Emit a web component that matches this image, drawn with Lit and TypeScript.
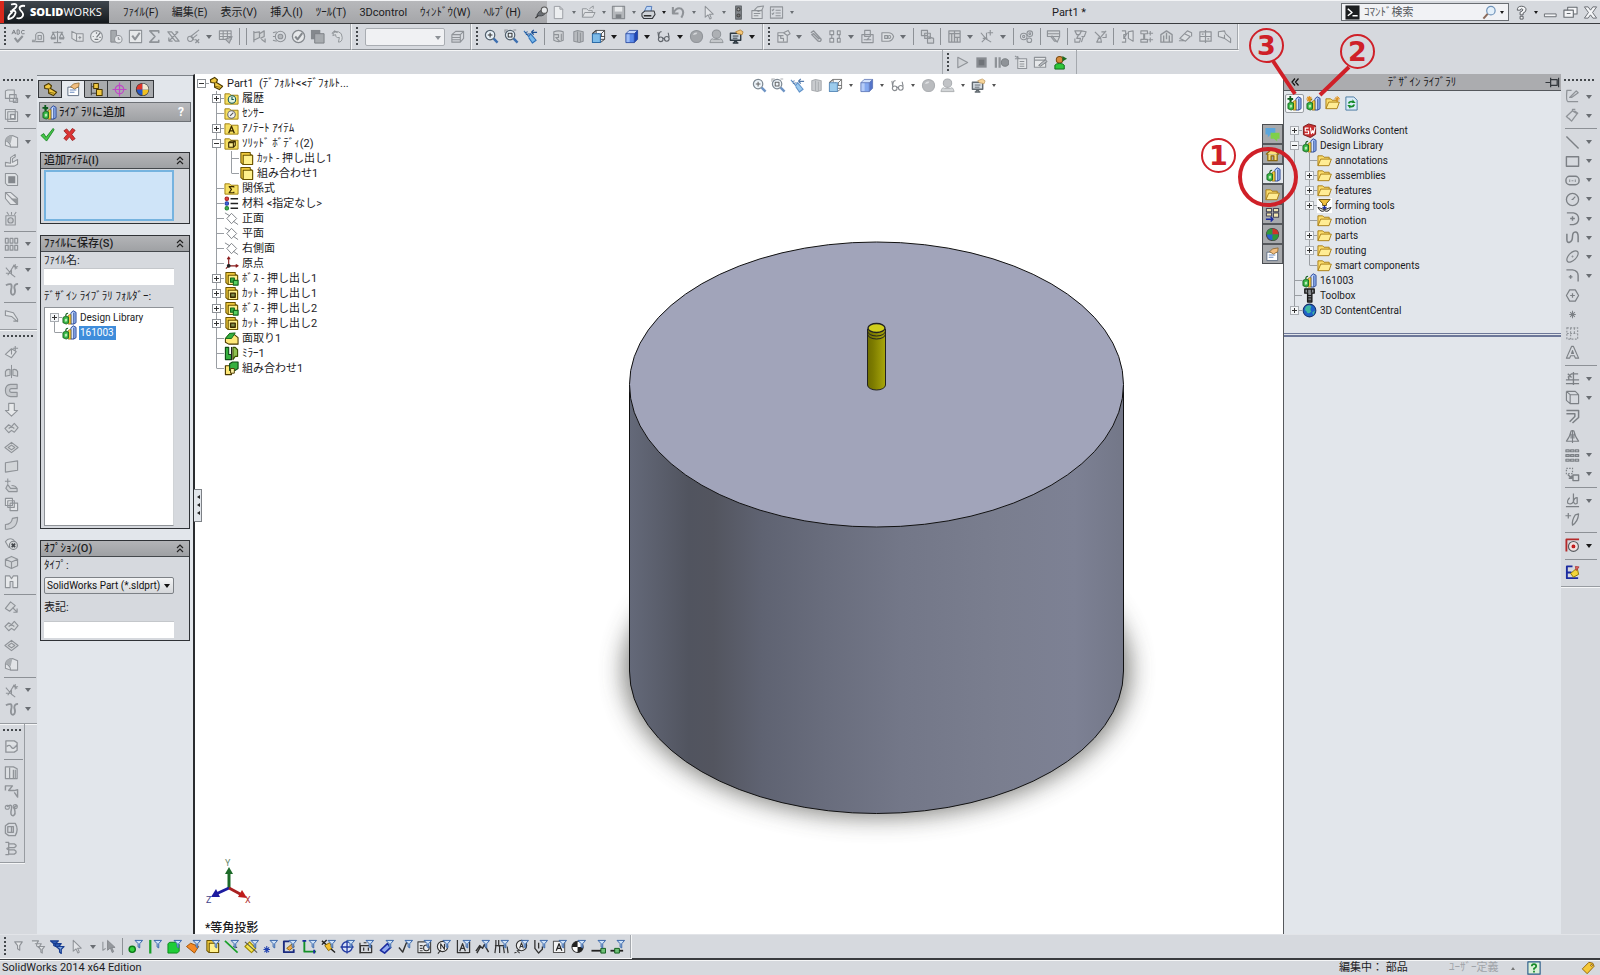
import { LitElement, html, css, nothing } from "lit";
import { customElement } from "lit/decorators.js";
import { classMap } from "lit/directives/class-map.js";
import { unsafeSVG } from "lit/directives/unsafe-svg.js";

const GREY = "#8f9398";
const line = (d: string, c = GREY, w = 1.15, f = "none") =>
  `<path d="${d}" fill="${f}" stroke="${c}" stroke-width="${w}" stroke-linejoin="round"/>`;
const fill = (d: string, c: string) => `<path d="${d}" fill="${c}"/>`;
const ring = (x: number, y: number, r: number, c = GREY, f = "none", w = 1.1) =>
  `<circle cx="${x}" cy="${y}" r="${r}" fill="${f}" stroke="${c}" stroke-width="${w}"/>`;

const funnel = (c = "#2f5fa8", f = "#cfe2f7") => line("M7.5 1.5H15.5L12.5 5V9.5L10.8 8.5V5Z", c, 1, f);
const books =
  line("M9.5 3L12 0.8L15 2.5V13.5L12.5 15H9.5Z", "#23408f", 0.9, "#8fb0ee") + fill("M10.2 3.4L12.2 1.8V14.2H10.2Z", "#d4e2fb") + line("M12.5 3V15", "#23408f", 0.8) +
  line("M6.5 6L8 5H9.5V15H6.5Z", "#8a6a10", 0.8, "#f7cf3c") +
  line("M1 8L4 6.5L7 7.5V13.5L4.5 15L1 13.5Z", "#14601c", 0.9, "#37b544") + fill("M3 9.5L5.5 9V12L3 12.5Z", "#b7ecb4") + line("M4 6.5Q4 3.5 6.5 3.5", "#14601c", 1.1);
const folder =
  line("M1 13.5V3H6L7.5 4.5H13V7", "#a87d14", 1, "#fbdc6c") + line("M1 13.5L4 6.5H15.3L12.8 13.5Z", "#a87d14", 1, "#ffec94");
const treeFolder = line("M1 3H6L7.5 4.5H15V14H1Z", "#a08010", 1, "#f5df62");
const yellowCube = line("M2 1.5H12V3.5L14.5 5V14.5H4.5L2 12.5Z", "#6b5400", 1.1, "#efc93c") + line("M4.5 4.5H14.5V14.5H4.5Z", "#6b5400", 1.1, "#fff08c");
const page = line("M3.5 1.5H9.5L12.5 4.5V14.5H3.5ZM9.5 1.5V4.5H12.5", "#9a9da2", 1, "#eceef0");
const glassy = (c: string, d = "") => ring(6.5, 6.5, 5, c, "#e8f1f8", 1.3) + line("M10.3 10.3L14.5 14.5", "#3d6fb0", 2.6) + line(d, "#333", 1.1);
const blueCube = (a: string, b: string, c: string, s: string) =>
  fill("M2 5L5.5 1.5H14.5L11 5Z", a) + fill("M11 5L14.5 1.5V11L11 14.5Z", b) + fill("M2 5H11V14.5H2Z", c) + fill("M2 5H6V14.5H2Z", "#9dbcf6") + line("M2 5L5.5 1.5H14.5V11L11 14.5H2ZM2 5H11V14.5M11 5L14.5 1.5", s, 0.8);
const screen = (k: string) => line("M1.5 4.5H12.5V12H1.5ZM4 15H10M5 15L7 12L9 15", k, 1.5, "#c9d2da") + line("M4 7.5H10M4 9.8H9", k, 1) + line("M7 3L12 1L15 3L14 6L9 5Z", "#a97a30", 0.8, "#f5c778");

const ICONS: Record<string, string> = {
  abc: line("M1 5.5L3 1L5 5.5M1.8 4H4.2M6.5 1V5.5H8.5Q9.8 4.2 8.5 3.3Q9.5 2 8.5 1ZM14.5 1.7Q11 0.5 11 3.3Q11 6.2 14.5 5", "#7c8085", 1) + line("M4 9.5L7 13.5L12.5 7.5", GREY, 2.3),
  measure: line("M5 12V6Q6 3.5 9 3.5Q13.5 3.5 13.5 8V13.5H5M1 12H5M7.5 11V7H11V11Z") + line("M1 13.5H5"),
  balance: line("M8 2V14M4 14.5H12M2 3.5H14M1 9.5L3.5 4L6 9.5ZM10 9.5L12.5 4L15 9.5ZM1 10.5H6M10 10.5H15"),
  section: line("M2 2.5L7 5H14V13H7L2 10ZM7 5V13M9 9H12M10.5 7.5V11", GREY, 1.1, "#dfe1e4"),
  gauge: ring(8, 8, 6.3, GREY, "#e9ebed", 1.3) + line("M8 9L12 4M4 8H5M8 3.5V5M11 9H12.5M6 11H10", "#777b80", 1.3),
  sensor: line("M3 1.5H9V14H3Z", "#84888d", 1, "#a5a9ad") + ring(11, 11, 4, GREY, "#e6e8eb") + line("M11 8.5V11H13"),
  check: line("M1.5 1.5H14.5V14.5H1.5Z", GREY, 1.2, "#e6e8ea") + line("M4.5 7L7.5 11L12.5 4", GREY, 2.2),
  sigma: line("M12.5 4.500V2H3L8.500 8L3 14H12.500V11.500", GREY, 1.7),
  triad: line("M2 3H6L14 13H10ZM13 3L8 8L3 13M3 13V9M3 13H7M13 3H10", GREY, 1.3),
  curve: line("M14 1L5 8L9 12M12 6L7 10") + ring(4.5, 10.5, 2.8) + line("M10 11L14 15M14 11L10 15", GREY, 1.4),
  table: line("M1.5 2H14V11H1.5ZM1.5 5H14M1.500 8H14M5.500 2V11M10 2V11", GREY, 1.2, "#dcdfe2") + line("M8 11L12 15L15 8Z", GREY, 1.2, "#b9bcc0"),
  tree: line("M2 2V14M2 4L8 3V9L2 12M8 5L13 2V8L9 10M10 11L14 14V10", GREY, 1.3, "#cfd2d5"),
  eye: ring(9, 8, 5.5) + ring(9, 8, 2.5, GREY, "#b5b8bc") + line("M1 4L5 3M1 8H4M1 12L5 13"),
  okc: ring(8, 8, 6.5, "#84888d", "#e6e8ea", 1.4) + line("M4.500 8L7 11L12 4.500", "#84888d", 2.2),
  stack: fill("M1 1H11V11H1Z", "#84888d") + line("M5 5H15V15H5Z", "#7b7f84", 1, "#a7abaf"),
  swirl: line("M3 7Q4 2 9 3Q13 4 13 9Q13 14 9 14L10 9Q6 10 6 6Z", GREY, 1, "#dcdfe2") + line("M2 5L5 2L8 4"),
  box3: line("M2 6L6 2.500H14.500V10L11 14H2ZM2 6H11L14.500 2.500M11 6V14M2 9H11M2 11.500H11"),
  zfit: glassy("#52616e", "M6.500 4V9M4 6.500H9"),
  zarea: glassy("#52616e", "M4.500 4.500H8.500V8.500H4.500Z") + line("M0.500 1H4M1 0.500V4M10 1H13"),
  zprev: line("M1 2L6 8L8 5L14 12L10 15L6 9", "#2d6fb8", 1.2, "#79b8ea") + line("M2 4L5 3M3 6L7 5", "#1d4f90", 1) + line("M9 3.500H15M9 3.500L11.500 1M9 3.500L11.500 6", "#1d4f90", 1.3),
  zebra: line("M3 3Q8 1 13 3V12Q8 15 3 12ZM3 6H8V9H5L9 13M11 5V12", GREY, 1.2, "#d0d3d6"),
  sect: line("M3 3L7 1.500L13 3V13L9 14.500L3 13ZM7 3V14M10 4V14", GREY, 1.1, "#b7babe"),
  cubewire: line("M5.500 1.500H14.500V11H5.500ZM8 4.500V8M11 4.500V8M5.500 8H14.500M11 5L14.500 1.500M10 14.500L14.500 11", "#333", 0.9, "#f5f6f8") + line("M1.500 5H10V14.500H1.500Z", "#2c6ca8", 1.100, "#7dbbe8") + line("M1.500 5L5.500 1.500", "#333"),
  cubeblue: blueCube("#c4d7fa", "#1c46b8", "#5b8bea", "#1b3c95"),
  glasses: line("M2 3L3 10M6 3Q3 2 3 9", "#60656b", 1.1) + ring(5, 11, 2.5, "#60656b", "none", 1.2) + ring(11.500, 10.500, 2.500, "#60656b", "none", 1.2) + line("M7 10H9M14 9L13 4", "#60656b", 1.2),
  ball: ring(8, 8, 6.500, "#8f9398", "#a3a6aa") + fill("M4 6Q6 3 9 4Q8 7 4 6Z", "#d5d7da"),
  scene: ring(8, 5.500, 4.500, "#8f9398", "#adb0b4") + line("M1 14.500Q2 9 5 11H11Q14 9 15 14.500Z", "#8f9398", 1, "#c4c7ca"),
  screen: screen("#2f3a42"),
  asm1: line("M2 4H8L12 7V14H2ZM8 4L13 1.500L15 5L12 7M5 7V10H8V13M2 7H8", GREY, 1.200, "#dcdfe2"),
  clip: line("M3 4L6 2L14 11Q14 14 11 13L4 6L6 5L12 11", GREY, 1.500),
  lin: line("M2 2H6V6H2ZM2 10H6V14H2ZM10 2H13V6H10ZM10 10H13V14H10ZM4 6V10M12 6V10", GREY, 1.200, "#dcdfe2"),
  smart: line("M2 6H14V14.500H2ZM5 1.500H11V8H5ZM4 11.500H12M10 9L7 12", GREY, 1.200),
  move: line("M2 4H9Q13 4 14.500 8Q13 13 9 13H2ZM5 7H8V10H5Z", GREY, 1.200, "#dcdfe2") + ring(10, 8.500, 1.500),
  cubes: line("M1.500 1.500H8V7H1.500ZM5 4.500H11V10H5ZM8 8L14.500 10V15H8Z", GREY, 1.200, "#cfd2d6"),
  wall: line("M2 2H14V14H2ZM2 5H14M5 5V14M8 2V14M8 9H14M11 9V14", GREY, 1.300, "#d0d3d6"),
  spark: line("M2 4L8 11L13 14M4 10H9M8 4V11M12 1V7M9 4H15M3 14L8 9", GREY, 1.200),
  gears: ring(5, 8, 3.500) + ring(11.500, 5, 3) + ring(11, 12, 2.500) + ring(5, 8, 1.200) + ring(11.500, 5, 1),
  warn: line("M1.500 2H14.500V8H1.500ZM1.500 5H14.500M6 7L12 14L14.500 8M5 8L9 13H12", GREY, 1.200, "#d4d7da"),
  expl: line("M2 2H9L7 6H4ZM9 2L14 3L12 8H9M6 6L4 10H8L7 14H2V10M11 8L9 14", GREY, 1.200),
  expl2: line("M2 3L7 8L4 14H9L8 9L14 2M10 9H14V5M5 10H8M9 3L13 3", GREY, 1.200),
  h1: line("M2 2H6V6H4V10H6V14H2M9 3L14 2V13L9 10ZM4 10L8 4", GREY, 1.200, "#dcdfe2"),
  h2: line("M2 2H9V5H6V11H9V14H2V11H5V5H2ZM12 2V7M10 4.500H15M12 9V14M10 11.500H15", GREY, 1.200),
  h3: line("M2 6L8 2L14 6V14H2ZM5 7V14M11 7V14M8 4V11", GREY, 1.400, "#d4d7da"),
  h4: line("M2 10L7 5L13 8L8 13ZM7 5L10 2L14.500 4V8M1 12.500H7", GREY, 1.200, "#dcdfe2"),
  h5: line("M2 3H14V13H2ZM2 8H14M8 1V15M4 5.500H6M10 10.500H12", GREY, 1.300, "#dcdfe2"),
  h6: line("M1.500 3L8 2L9 5L14.500 10V14.500L8 10L1.500 8ZM8 10V6", GREY, 1.200, "#dcdfe2"),
  play: line("M3 2.500L13.500 8L3 13.500Z", GREY, 1.200, "#d0d3d7"),
  stop: fill("M2.500 2.500H13.500V13.500H2.500Z", "#888c91") + fill("M5 5H11V11H5Z", "#6f7378"),
  rec: line("M2 2.500V13.500M6 2.500V13.500", GREY, 2.400) + ring(11.800, 8, 4, "#7c8085", "#8f9398"),
  macro: line("M4 4H13.500V14.500H4ZM1 1L6 4M6 7H11M6 9.500H11M6 12H11M4 1V6M1 4H6", GREY, 1.100, "#e2e4e7"),
  macroed: line("M1.500 2.500H13.500V13H1.500ZM1.500 5.500H13.500", GREY, 1.200, "#e6e8ea") + line("M6 11L13 5L15 7L8 12Z", "#7c8085", 1, "#b9bcc0"),
  person: ring(7, 5, 3.500, "#7a4a10", "#d68a3c") + line("M2 15V11Q3 9 7 9Q11 9 12 11V15Z", "#0d6a18", 1, "#2fc63a") + fill("M10 1L15 4L10 7Z", "#1d6b22"),
  pin: line("M1.500 14L7 9", "#333", 1.400) + line("M3 11Q5 6 9 5L12 9Q9 13 3 11Z", "#44484d", 1, "#6a6e73") + ring(11, 5.500, 3.300, "#555", "#e6e8ea"),
  new: page,
  open: line("M1.500 13V4H6L8 6H12V8M1.500 13L4 8H15L12.500 13ZM9 4L13 1V4", GREY, 1, "#dfe1e4"),
  save: line("M1.500 1.500H14.500V14.500H1.500Z", "#8a8e93", 1.2, "#b4b7bb") + fill("M4 2H12V7H4Z", "#e7e9eb") + fill("M5 10H11V14H5Z", "#7c8085"),
  print: line("M3 8L6 1.500H11.500L10.500 8Z", "#4f78b8", 1, "#bcd6f8") + line("M1 9L4 6.500H14L15 10L12 14.500H3L1 12Z", "#33373c", 1.100, "#cfd3d8") + line("M3 11.500H11", "#222", 1.500),
  undo: line("M2 2V9H8M2.500 8.500Q6 2 11 4Q15 7 11 13.500", "#8f9398", 2.200),
  select: line("M4.500 1.500V13L7.500 10.500L9.500 15L11 14L9.200 9.800H13Z", "#8f9398", 1.100, "#e3e5e8"),
  light: line("M5 1H11V15H5Z", "#5f6368", 1.200, "#85898e") + ring(8, 4.700, 1.700, "#444", "#aaa") + ring(8, 11.200, 1.700, "#444", "#777"),
  props: line("M2 6H13V14.500H2ZM4 9H11M4 11.500H9M5 5L8 2L14.500 1L13 5L9 7Z", GREY, 1.100, "#dcdfe2"),
  list: line("M1.500 2H14.500V14H1.500ZM7 5.500H12.500M7 8.500H12.500M7 11.500H12.500M3 5L4 6L5.500 4M3 9L4 10L5.500 8", GREY, 1.100),
  prompt: fill("M0.500 0.500H15.500V15.500H0.500Z", "#1c1e20") + line("M3 4L7.500 8L3 11.500M8 11.500H13.500", "#fff", 1.600),
  lens: ring(9.500, 6, 4.500, "#6f93ba", "#e4f0fa", 1.300) + line("M6 9.500L1.500 14.500", "#8a6a5a", 2.200),
  help: line("M3.500 5.500Q3.500 1.300 8 1.300Q12.800 1.500 12.800 5.200Q12.800 7.500 9.700 8.600V10.500H6.500V7.500Q9.500 6.500 9.400 5.200Q9.200 4 8 4Q7 4 6.800 5.500ZM6.500 12H9.700V15H6.500Z", "#55595e", 1, "#f4f5f7"),
  min: line("M1.500 9.500H14V12.500H1.500Z", "#666b70", 1, "#f4f5f7"),
  restore: line("M5 2.500H15V9.500H5Z", "#666b70", 1.100, "#f4f5f7") + line("M1 5.500H11V13H1ZM4 9H8", "#666b70", 1.200, "#f4f5f7"),
  close: line("M1.500 2H5.500L8 5.500L10.500 2H14.500L10.200 8L14.500 14H10.500L8 10.500L5.500 14H1.500L5.800 8Z", "#666b70", 1, "#f4f5f7"),
  l1: line("M1.500 2L4 1H11V10H1.500ZM6 6H13V13H6ZM10 10V14.500H14.500V10Z", GREY, 1.100, "#dde0e3"),
  l2: line("M1.500 1.500H12V12H1.500ZM4 4H14.500V14.500H4Z", GREY, 1.100, "#dde0e3") + line("M7 7H11.500V11.500H7Z", GREY, 1.500, "#eceef0"),
  l3: line("M1.500 7Q3 1.500 9 1.500L14.500 4V14H7Q7 9 1.500 7ZM1.500 7V12L7 14", GREY, 1.100, "#e2e4e7") + fill("M1.500 7Q3 1.500 9 1.500L7 10Q5 8 1.500 7Z", "#aaaeb2"),
  l4: line("M1.500 10V14H11L14.500 12V7L9 10V6L12 4V1.500L7 5V11Z", GREY, 1.100, "#e2e4e7"),
  l5: line("M1.500 1.500H12L14.500 4V14.500H4L1.500 12Z", GREY, 1.100, "#dde0e3") + fill("M4.500 4.500H12V12H4.500Z", "#84888d"),
  l6: line("M1.500 1.500H7L14.500 8V14.500H7L1.500 8Z", GREY, 1.100, "#e2e4e7") + fill("M7 8L14.500 8V14.500Z", "#94989c") + line("M1.500 1.500L14.500 14.500"),
  l7: line("M2 5H12V15H2ZM3 1L5 4M8 1V4M13 1L11 4") + ring(7, 10, 2.800, GREY, "#c9ccd0", 1.300),
  l8: [1.500, 6.500, 11.500].map((x) => [1.500, 9].map((y) => line(`M${x} ${y}h3v5h-3Z`, GREY, 1.300)).join("")).join(""),
  l9: line("M2 5L8 12L12 15M2 11H8V6M11 2L4 13M12 1V7M9 4H15M10 2L14 6", GREY, 1.100),
  l10: line("M2 3.500Q9 0 8 6Q6 14 10 13.500Q13 12 11 6Q11 2 15 2", GREY, 2),
  l11: line("M1.500 3L10 5L14.500 12V14.500L8 9L1.500 8ZM10 14H14", GREY, 1.200, "#dfe2e5"),
  l12: line("M1.500 10L8 4L13 7L8 13.500ZM8 4V10M12 1V6M9.500 3.500H15", GREY, 1.200, "#dfe2e5"),
  l13: line("M1.500 13V8Q3 5 6.500 6V12ZM9.500 12V6Q13 5 14.500 8V13Z", GREY, 1.200, "#d0d3d6") + line("M8 1V15", GREY, 1.100),
  l14: line("M14 1.500H7Q1.500 2 1.500 8Q1.500 14 7 14.500H14V10H8Q6 10 6 8Q6 6 8 6H14Z", GREY, 1.200, "#c6c9cd"),
  l15: line("M5 1.500H11V9H14.500L8 15L1.500 9H5Z", GREY, 1.200, "#e6e8ea"),
  l16: line("M1 8L5 4L8 6L11 2.500L15 7L11 12L8 10L5 12.500ZM5 8Q8 5 11 8", GREY, 1.200, "#d4d7da"),
  l17: line("M1 8L8 2.500L15 8L8 13.500ZM4.500 8L8 5.500L11.500 8L8 10.500Z", GREY, 1.200, "#d4d7da"),
  l18: line("M1.500 4L14.500 2V12L1.500 14Z", GREY, 1.200, "#d2d5d8"),
  l19: line("M4 0.500V6M1 3.500H7M4 7L7 11H14V14.500H5L2 11ZM14 12Q13 8 8 8", GREY, 1.200, "#cdd0d4"),
  l20: line("M1.500 1.500H9V9H1.500ZM4 4H11V11H4ZM6.500 6.500H14.500V14.500H6.500Z", GREY, 1.200, "#e2e4e7"),
  l21: line("M1.500 14V9Q8 9 9 2.500L14.500 1.500Q14 15 1.500 14Z", GREY, 1.200, "#cdd0d4"),
  l22: line("M1.500 6Q5 1 10 4L13 8Q10 13 5 12Z", GREY, 1.100, "#dde0e3") + ring(10, 10, 4.300, "#7c8085", "#cfd2d5") + line("M8.200 8.200L11.800 11.800M11.800 8.200L8.200 11.800", "#44484d", 1.800),
  l23: line("M1.500 4.500L8 1.500L14.500 4.500V11.500L8 14.500L1.500 11.500ZM1.500 4.500L8 7.500L14.500 4.500M8 7.500V14.500", GREY, 1.200, "#d2d5d8"),
  l24: line("M1.500 2H6L8 5L10 2H14.500V14.500H9.500V8H6.500V14.500H1.500Z", GREY, 1.200, "#e6e8ea"),
  l25: line("M1.500 9L7 2L12 6L6 12ZM9 8L14 13V9M14 13H10", GREY, 1.200, "#d4d7da"),
  l26: line("M2 2H11L14 4V12L11 14H2ZM3 8Q6 5 8 9Q10 12 14 6", GREY, 1.400, "#dfe2e5"),
  l27: line("M1.500 2H10L14 4V14.500H1.500ZM6 3V14M10 5V14M12 5V14", GREY, 1.300, "#dcdfe2"),
  l28: line("M1.500 7V2H9L5 7H11L14.500 6V14L11 9", GREY, 1.500),
  l29: line("M3 4Q9 0 8 6Q6 14 10 13.500Q13 12 11 6Q11 3 14 3", GREY, 1.600) + ring(3.500, 4.500, 2.200) + ring(12, 3.800, 2.200),
  l30: line("M1.500 4L5 1.500H12Q16 8 12 14.500H5L1.500 12ZM4 5H10V11H4ZM8 5V11", GREY, 1.400),
  l31: line("M1.500 1.500H5V14.500H1.500M5 3H11Q15 5 11 7H5Q1 8 5 9.500H11Q15 11.500 11 14H5", GREY, 1.400),
  r1: line("M7 1.500H2Q1 13 3 13.500H14M5 9L12 2L14 4L7 9Z", GREY, 1.400),
  r2: line("M1.500 9L8 3L13 6L7 14ZM4 11L7 14M10 3L14 6M8 3V1.500L11 1.500", GREY, 1.400),
  r3: line("M1.500 1.500L14.500 14.500", "#7c8085", 1.500),
  r4: line("M1.500 3H14.500V13H1.500Z", "#7c8085", 1.500),
  r5: `<rect x="1" y="3.500" width="14" height="9" rx="4" fill="none" stroke="#7c8085" stroke-width="1.500"/>` + line("M5 7V9.500M11 7V9.500M7 8.200H9"),
  r6: ring(8, 8, 6.500, "#7c8085", "none", 1.400) + line("M8 8L11 5M7 8H9", "#7c8085"),
  r7: line("M2 2H9Q14.500 3 14.500 8.500Q14.500 13.500 9 14.500H5M5.500 8H10.500M8 5.500V10.500", "#7c8085", 1.500),
  r8: line("M2 4V10Q2 14 5 13Q8 12 8 7Q8 2 11 2Q14 2 14 7V13", "#7c8085", 1.600),
  r9: `<ellipse cx="8" cy="8" rx="7.500" ry="4" transform="rotate(-45 8 8)" fill="none" stroke="#7c8085" stroke-width="1.300"/>` + line("M7 8H9M8 7V9"),
  r10: line("M1.500 2H8Q14 3 14 8V14.500M4 9.500H8M6 7.500V11.500", "#7c8085", 1.500),
  r11: line("M5 2H11L14.500 8L11 14H5L1.500 8ZM5.500 8H10.500M8 5.500V10.500", "#7c8085", 1.300),
  r12: line("M8 4V12M4.500 8H11.500M5.500 5.500L10.500 10.500M10.500 5.500L5.500 10.500", "#7c8085", 1.100),
  r13: `<path d="M2 2H13.500V14H2ZM2 8H13M6 2V14M10 2V8" fill="none" stroke="${GREY}" stroke-width="1.200" stroke-dasharray="2 1.500"/>`,
  r14: line("M7 1.500L1.500 14H5L6 11.500H10L11 14H14.500L9 1.500ZM8 6L7 9H9Z", "#7c8085", 1.200),
  r15: line("M1 9.500H15M1 13.500H15M9 1V15M3 3L7 7M3 7L7 3H14M4 6V9", "#7c8085", 1.400),
  r16: line("M5.500 5H14.500V14.500H5.500ZM1.500 1.500L5.500 5M1.500 1.500V11L5.500 14.500M1.500 1.500H11L14.500 5", "#7c8085", 1.200),
  r17: line("M1.500 1.500H14.500V9L8 15M1.500 5H10.500V8L5 13.500", "#7c8085", 1.600),
  r18: line("M8 1V15M6.500 2Q5 9 1.500 13H14.500Q11 9 9.500 2ZM6.500 5V10M9.500 5V10", "#7c8085", 1.200),
  r19: [1, 6, 11].map((x) => [2, 7, 12].map((y) => line(`M${x} ${y}h3.500v2h-3.500Z`, "#7c8085", 1.300)).join("")).join(""),
  r20: line("M8.500 8.500H14.500V14.500H8.500ZM3 8L7 12M7 9V12H4", "#7c8085", 1.500) + `<path d="M1.500 1.500H8V7H1.500Z" fill="none" stroke="#7c8085" stroke-width="1.300" stroke-dasharray="1.500 1.500"/>`,
  r21: line("M1 14.500H15M9 0.500V10M5 5Q2 8 3 11Q7 13 9 9Q10 5 13 5V11Q10 13 9 9", "#7c8085", 1.300),
  r22: line("M3.500 1V7M0.500 4H6.500M8 14Q7 9 11 3L14.500 2Q14 10 8 14Z", "#7c8085", 1.300),
  r23: line("M1.500 14.500V1.500H15", "#b52a2a", 2) + ring(9, 9, 5.300, "#555a5f", "#f0e0e0", 1.200) + ring(9, 9, 1.500, "#b11", "#c22"),
  r24: line("M8 1.500H2V14H14M2 8H7", "#1b2ba0", 2) + line("M6 9L13 3L14.500 10L9 13Z", "#8a7400", 1, "#f2d63a") + line("M11 1.500L15 2L12 6Z", "#a33", 0.800, "#d66"),
  part: line("M1.500 4L6 1.500L9 4L8 7L14.500 11L11 14.500L6 12V7.500L2 7Z", "#4a3800", 1.200, "#f0c840") + line("M6 7.500L9 5M6.500 11L12 12", "#6b5400", 0.800),
  pm: line("M2 5.500H13.500V14.500H2Z", "#5b6b80", 1, "#fff") + line("M4 8.500H11M4 11H9", "#6a8ac0") + line("M5 5L8 2L14 1L13.500 5L9 7.500Z", "#8a6020", 0.800, "#f2be80"),
  cfg: line("M2.500 1V14M2.500 5H6M2.500 12H8", "#444") + line("M5 1.500H10V7H5ZM8 8H14V14.500H8Z", "#4a3800", 1.100, "#f0c840"),
  dim: ring(8, 8, 4.500, "#c048c8", "none", 1.300) + line("M8 0.500V15.500M0.500 8H15.500", "#c048c8", 1.300),
  globe: ring(8, 8, 6.500, "#333", "#2456c8") + fill("M8 1.500A6.500 6.500 0 0 0 1.500 8H8Z", "#e03428") + fill("M8 8H14.500A6.500 6.500 0 0 1 8 14.500Z", "#f0c020") + fill("M8 1.500A6.500 6.500 0 0 1 14.500 8H8Z", "#f4e9d0"),
  globe2: ring(8, 8, 6.500, "#444", "#2a62d0") + fill("M8 1.500A6.500 6.500 0 0 0 1.500 8H8Z", "#2e9a3a") + fill("M8 1.500A6.500 6.500 0 0 1 14.500 8H8Z", "#d03428") + fill("M8 8H14.500A6.500 6.500 0 0 1 8 14.500Z", "#2e9a3a"),
  addlib: books + line("M3.500 0V6M0.500 3H6.500", "#0b5a1c", 1.900),
  newlib: books + line("M3.500 0V6.500M0.300 3.200H6.700M1.300 1L5.700 5.500M5.700 1L1.300 5.500", "#e09018", 1.200),
  books,
  folder,
  newfolder: folder + line("M13 0V6M10 3H16M11 1L15 5M15 1L11 5", "#e09018", 1),
  refresh: line("M2 1H10.500L14 4.500V15H2Z", "#4878a0", 1, "#d9eaf8") + line("M5 8Q6 5 10 6.500M11 9Q10 12 6 11", "#158a2a", 1.900) + fill("M9 3.500L12.500 7.500H9ZM3.500 9.500H7L6.500 13.500Z", "#158a2a"),
  ok: line("M1 9L4 7L6.500 11L14 1.500L15 3L7 15Z", "#17801f", 0.900, "#46c84a"),
  cancel: line("M2 4L5 2L8 5.500L11 1.500L14 3.500L10.500 8L14 12.500L11 14.500L8 10.500L4.500 14.500L2 12L5.500 8Z", "#901818", 0.800, "#dc3434"),
  folderHist: treeFolder + ring(8.500, 9, 4, "#155", "#dff2e0") + line("M8.500 6.500V9H10.500", "#155"),
  folderSensor: treeFolder + ring(8, 9, 4, "#666", "#f4f4f4") + line("M6.500 10.500L10 7", "#555"),
  folderA: treeFolder + line("M5 13L8 5.500L11 13M6 10.500H10", "#3a2b00", 1.400),
  folderSolid: treeFolder + line("M5 7L7 5.500H12V10L10 12H5ZM5 7H10V12M10 7L12 5.500", "#3a2b00", 1.200, "#ffef90"),
  folderSum: treeFolder + line("M10.500 7V6H5.500L8 9L5.500 12.500H10.500V11.500", "#3a2b00", 1.200),
  body: yellowCube,
  material: ring(3, 3, 1.900, "#a02020", "#e04040") + ring(3, 8, 1.900, "#2040a0", "#4060e0") + ring(3, 13, 1.900, "#208030", "#40b050") + line("M7 3H15M7 8H15M7 13H15", "#222", 1.700),
  plane: line("M3 8L8 2.500L13.500 8L8 13.500ZM1 2L6 5M10 11L15 14.500", "#6d7278", 0.900),
  origin: line("M5 1.500V10.500H14.500M5 10.500L2 13.500M3.500 3.500L5 1L6.500 3.500M12.500 9L15 10.500L12.500 12", "#8b1c1c", 1.200) + ring(5, 10.500, 1.500, "#222", "#222"),
  boss: yellowCube + line("M7 7.500H11V12H7Z", "#146a1c", 1.200, "#36b040") + line("M10 10H15V15H10Z", "#146a1c", 1.200, "#5ad060"),
  cut: yellowCube + line("M7 7.500H12V12H7Z", "#3a2b00", 1.400, "#7c8a4a"),
  chamfer: line("M1.500 8L6 3H10L15 7V14H5L1.500 12Z", "#4a3800", 1.100, "#ffe878") + line("M1.500 8L6 2.500L12 2L8 8Z", "#146a1c", 1, "#36b040"),
  mirror: line("M1.500 1.500H5V9H8V14.500H1.500Z", "#0e4a14", 1.200, "#36b040") + line("M9.500 1.500H12L14.500 4V11H12L9.500 14.500Z", "#3a5000", 1.200, "#8ec050") + line("M8 1V15", "#222"),
  combine: line("M1.500 5H8V14.500H1.500Z", "#4a3800", 1.200, "#ffe878") + line("M6 3L9 1H15V8L12 10H6Z", "#0e4a14", 1.200, "#36b040") + line("M7 8H11V13H7Z", "#4a3800", 1, "#fff3a6"),
  swc: line("M1.500 4L7 1L14.500 3V12L9 15.500L1.500 12.500Z", "#7a1818", 1, "#c83030") + line("M7 5.500H3.500V8.500H7V11.500H3M9 5L10 11.500L11.500 8L12.500 11L14 4.500", "#fff", 1.200),
  forming: fill("M0 0H16V16H0Z", "#fff") + line("M2 1.500H14L10 6V8H6V6Z", "#5f4800", 1, "#f0c040") + line("M8 8V11M6 9.500L8 12L10 9.500", "#1b2ba0", 1.300) + line("M1 10Q4 16 8 13.500Q12 16 15 10L12 11Q8 14 4 11Z", "#222", 1, "#ddd"),
  bolt: line("M3 1H13V5.500H10.500V15H6V5.500H3Z", "#1a1a1a", 1.500, "#8a8e92") + line("M6 8H10M6 10.500H10M6 13H10M6 1V5M10 1V5", "#1a1a1a"),
  earth: ring(8, 8, 6.800, "#15306a", "#1f62c8") + fill("M4 4Q8 1 10 4Q8 7 10 9Q6 13 5 9Q2 8 4 4Z", "#3fb8a0") + fill("M11 10L14 8L12 13Z", "#3fb8a0"),
  chat: fill("M0.500 1H11V8H6L3 11V8H0.500Z", "#5ba6dc") + fill("M6 6H15.500V12.500H13V15.500L9.500 12.500H6Z", "#7fd04a"),
  home: line("M1 8L8 1.500L15 8M3 7.500V14.500H13V7.500M6.500 14V9.500H9.500V14", "#8a6810", 1.300, "#fae27a"),
  palette: line("M1.500 1.500H7V5H1.500ZM9 1.500H14.500V5H9ZM1.500 6.500H7V9.500H1.500ZM9 6.500H14.500V11H9Z", "#445", 1.100, "#f0e4b0") + line("M1 13H8M6 10.500L8.500 13L6 15.500", "#1b2ba0", 1.500),
  statusHelp: line("M1 1H15V15H1Z", "#2a5c8a", 1.300, "#d9f0d8") + line("M5.500 6Q5.500 3.500 8 3.500Q10.500 3.500 10.500 6Q10.500 7.500 8 8.500V10", "#158a2a", 2) + fill("M7 11.200H9V13.200H7Z", "#158a2a"),
  tag: line("M1.500 9L9 1.500L13.500 2.500L15 6L7 14.500Z", "#8a5c00", 1, "#f5c838") + ring(12, 5, 1, "#8a5c00", "#fff"),
  pushpin: line("M0.500 8H6M6 3V13M6 5H13V11H6M14.500 3V13", "#33373c", 1.300),
  f0: line("M4 3H12L9.300 7V12L7 10.500V7Z", GREY, 1.200, "#e6e8ea"),
  f1: line("M1 2H8L6 5V8M4 5H11L9 8V11M7 8H14.500L12 11V15L10.500 14V11Z", GREY, 1.200, "#dfe2e5"),
  f2: line("M0.500 2H9L6 5V8L4 7V5ZM4 5H12L9.500 8V11", "#173c90", 1.300, "#2f5fb8") + line("M6.500 8H15L12 11V15.500L10.200 14V11Z", "#173c90", 1.300, "#7fa8e0"),
  f3: line("M7 1.500V12L10 9.500L12 14.500L13.500 13.500L11.500 9H15Z", "#84888d", 1, "#94989d") + line("M2 3V12L5 10"),
  v1: ring(4.500, 11, 3.300, "#0c7a18", "#35d040", 1.500) + funnel(),
  v2: line("M3.500 1V15.500", "#18a028", 2.400) + funnel(),
  v3: line("M1 5L3 3.500H11L13 6V13L11 15H1Z", "#0a8a18", 1, "#20cc38") + funnel(),
  v4: line("M0.500 8L5 4.500L13.500 8L9 15Z", "#a05000", 1, "#f58a28") + funnel(),
  v5: yellowCube + funnel(),
  v6: line("M1 2L14.500 14.500", "#18a028", 1.800) + line("M10 8L14 9", "#333") + funnel(),
  v7: line("M1 8L6 3L12.500 10L8 14.500Z", "#a08a00", 1.200, "#f5e650") + line("M1 3L14 14.500", "#555") + funnel(),
  v8: line("M4 7.500V15M0.500 11.200H7.500M1.500 9L6.500 14M6.500 9L1.500 14", "#2040b0", 1.100) + funnel(),
  v9: line("M8 2.500H2V14H12.500V11", "#1b2b80", 2) + line("M5 10L11 5L13 8L8 12Z", "#8a6a00", 1, "#f5a850") + funnel(),
  v10: line("M2.500 2V13.500H15", "#159028", 2) + line("M0.500 2H4.500M13 11.500V15.500", "#1b2ba0", 2) + funnel(),
  v11: line("M1 2L15 14.500M1 6L6 1", "#222", 1.500) + line("M4 7L9 4L12.500 9L8 12.500Z", "#8a6a00", 1, "#f5c030") + funnel(),
  v12: ring(7.500, 8.500, 5.500, "#2038a0", "#dbe3f8", 1.500) + line("M7.500 1.500V15.500M0.500 8.500H14.500", "#2038a0", 1.400) + funnel(),
  v13: line("M1.500 7H13.500V14.500H1.500ZM5 9V12.500M10 9V12.500M1 4V15.500M5 4H8", "#333", 1.300) + funnel(),
  v14: line("M1.500 12L9 5L12.500 9L6 15Z", "#1b2ba0", 1.700, "#90a8f0") + funnel(),
  v15: line("M1 9L5 14L9 4H12", "#333", 1.500) + funnel(),
  v16: line("M1 3H14.500V14.500H1ZM3 7H6M3 10H6M3 12.500H6", "#444", 1.200, "#e8eaec") + ring(10, 9.500, 3, "#333") + funnel(),
  v17: ring(7, 8, 5.500, "#333", "#eee", 1.200) + line("M5 11V5L9 11V5M2 15.500L5 12", "#333", 1.200) + funnel(),
  v18: line("M1.500 1V15M14.500 3V15M4 13L7 5L10 13M5 10H9M1 14.500H14", "#333", 1.300) + funnel(),
  v19: line("M1 13L5 7L8 10L10 6L14.500 14M2 15L6 8", "#333", 1.500) + funnel(),
  v20: line("M2 1V7M5 1V8M2 7L1 15M6 7V15M10 8L11 15M14 8L15 15M1 7H13", "#333", 1.300) + funnel(),
  v21: ring(8, 7, 5.500, "#333", "#eee", 1.200) + line("M6 10L8 4L10 10M6.500 8H9.500M0.500 15L6 12M3 12L6 15", "#333", 1.100) + funnel(),
  v22: line("M2 1V10L6 15L10 11V8M6 4V10", "#333", 1.400) + funnel(),
  v23: line("M1.500 2.500H13.500V14.500H1.500Z", "#555", 1.100, "#f2f3f4") + line("M4.500 12.500L7.500 5L10.500 12.500M6 10H9", "#222", 1.300) + funnel(),
  v24: ring(7, 8.500, 6, "#333", "#fff", 1.100) + fill("M7 2.500V8.500H1A6 6 0 0 1 7 2.500ZM7 14.500V8.500H13A6 6 0 0 1 7 14.500Z", "#222") + funnel(),
  v25: line("M0.500 12.500H11", "#222", 1.900) + line("M10.500 10H15.500V15H10.500Z", "#0c5a18", 1, "#6fbf78") + funnel(),
  v26: line("M0.500 12.500H14", "#222", 1.900) + line("M5 10H10V15H5Z", "#0c5a18", 1, "#6fbf78") + funnel(),
};

const icon = (name: string, cls = "") =>
  html`<svg class="ico ${cls}" viewBox="0 0 16 16" aria-hidden="true">${unsafeSVG(ICONS[name] ?? "")}</svg>`;

/* Toolbar notation: "|" separator, ":" grip, "name>" grey drop arrow, "name!" black drop arrow. */
const tools = (spec: string) =>
  spec.trim().split(/\s+/).map((token) => {
    if (token === "|") return html`<i class="sep"></i>`;
    if (token === ":") return html`<i class="grip"></i>`;
    const drop = token.endsWith(">") ? "grey" : token.endsWith("!") ? "black" : "";
    const name = drop ? token.slice(0, -1) : token;
    return html`<span class="tool"><button class="tb" aria-label=${name}>${icon(name)}</button>${drop
      ? html`<button class="drop ${drop}" aria-label="${name} menu"></button>` : nothing}</span>`;
  });

interface Node { guides: string; icon: string; text: string; box?: "+" | "-"; selected?: boolean; }
const n = (guides: string, ic: string, text: string, box?: "+" | "-", selected = false): Node => ({ guides, icon: ic, text, box, selected });

/* Guide letters: "." blank, "v" vertical, "t" tee, "l" elbow, "d" downward start, "h" horizontal only. */
const tree = (nodes: Node[], cls: string) => html`<ul class="tree ${cls}">
  ${nodes.map((r) => html`<li class="row">
    ${[...r.guides].map((g, i) => html`<span class="guide g-${g === "." ? "none" : g}">${r.box && i === r.guides.length - 1
      ? html`<button class="box" aria-label=${r.box === "+" ? "expand" : "collapse"}><svg viewBox="0 0 7 7"><path d=${r.box === "+" ? "M1 3.5H6M3.5 1V6" : "M1 3.5H6"} stroke="#333" fill="none"/></svg></button>` : nothing}</span>`)}
    ${icon(r.icon)}<span class=${classMap({ label: true, selected: !!r.selected })}>${r.text}</span></li>`)}
</ul>`;

const PART_TREE: Node[] = [
  n("h", "part", "Part1  (ﾃﾞﾌｫﾙﾄ<<ﾃﾞﾌｫﾙﾄ...", "-"),
  n(".t", "folderHist", "履歴", "+"), n(".t", "folderSensor", "ｾﾝｻｰ"), n(".t", "folderA", "ｱﾉﾃｰﾄ ｱｲﾃﾑ", "+"),
  n(".t", "folderSolid", "ｿﾘｯﾄﾞ ﾎﾞﾃﾞｨ(2)", "-"), n(".vt", "body", "ｶｯﾄ - 押し出し1"), n(".vl", "body", "組み合わせ1"),
  n(".t", "folderSum", "関係式"), n(".t", "material", "材料 <指定なし>"), n(".t", "plane", "正面"), n(".t", "plane", "平面"),
  n(".t", "plane", "右側面"), n(".t", "origin", "原点"), n(".t", "boss", "ﾎﾞｽ - 押し出し1", "+"), n(".t", "cut", "ｶｯﾄ - 押し出し1", "+"),
  n(".t", "boss", "ﾎﾞｽ - 押し出し2", "+"), n(".t", "cut", "ｶｯﾄ - 押し出し2", "+"), n(".t", "chamfer", "面取り1"),
  n(".t", "mirror", "ﾐﾗｰ1"), n(".l", "combine", "組み合わせ1"),
];
const LIBRARY_TREE: Node[] = [
  n("d", "swc", "SolidWorks Content", "+"), n("t", "books", "Design Library", "-"),
  n("vt", "folder", "annotations"), n("vt", "folder", "assemblies", "+"), n("vt", "folder", "features", "+"),
  n("vt", "forming", "forming tools", "+"), n("vt", "folder", "motion"), n("vt", "folder", "parts", "+"),
  n("vt", "folder", "routing", "+"), n("vl", "folder", "smart components"),
  n("t", "books", "161003"), n("t", "bolt", "Toolbox"), n("l", "earth", "3D ContentCentral", "+"),
];
const SAVE_TREE: Node[] = [n("d", "books", "Design Library", "+"), n("l", "books", "161003", undefined, true)];

const MENUS = ["ﾌｧｲﾙ(F)", "編集(E)", "表示(V)", "挿入(I)", "ﾂｰﾙ(T)", "3Dcontrol", "ｳｨﾝﾄﾞｳ(W)", "ﾍﾙﾌﾟ(H)"];
const chevrons = html`<svg class="chev" viewBox="0 0 8 9"><path d="M1 4L4 1L7 4M1 8L4 5L7 8" fill="none" stroke="#222" stroke-width="1.2"/></svg>`;

@customElement("app-root")
export class AppRoot extends LitElement {
  static styles = css`
    :host { display: flex; flex-direction: column; height: 100vh; overflow: hidden; background: #d6d9de; color: #1c1c1e;
      font: 11px/15px Roboto, "Noto Sans CJK JP", sans-serif; }
    * { box-sizing: border-box; }
    button { appearance: none; border: 0; background: none; padding: 0; margin: 0; color: inherit; font: inherit; display: flex; align-items: center; justify-content: center; }
    .ico { width: 15px; height: 15px; flex: none; display: block; }
    .tool { display: flex; flex: none; }
    .tb { width: 19px; height: 19px; }
    .drop { width: 13px; height: 19px; }
    .drop::before { content: ""; border: 3px solid transparent; border-top: 4px solid #6a6e73; border-bottom: 0; }
    .drop.black::before { border-top-color: #1a1a1a; }
    .sep { width: 1px; height: 17px; margin: 0 3px; background: #8d9196; flex: none; }
    .grip { width: 2px; height: 19px; margin: 0 3px; flex: none; background: repeating-linear-gradient(#44484c 0 2px, transparent 2px 4px); }

    .title { display: flex; align-items: center; height: 24px; border-top: 1px solid #f3f4f6; border-bottom: 1px solid #3a3c3f; flex: none; }
    .logo { display: flex; align-items: center; gap: 4px; height: 22px; width: 109px; padding-left: 3px; border-left: 4px solid #d8281c; background: linear-gradient(#40474e, #14191d); color: #fff; font: 11px/22px "Open Sans", sans-serif; }
    .logo b { font-weight: 800; }
    .ds { width: 19px; height: 18px; flex: none; }
    .menus { display: flex; align-items: center; gap: 13px; height: 22px; width: 438px; padding: 0 2px 0 14px; background: linear-gradient(#b7b8bb, #a5a6a9); }
    .menus .pin { margin-left: auto; }
    .menus button { white-space: nowrap; }
    .quick { display: flex; padding-left: 2px; }
    .quick .drop { width: 11px; }
    .quick .drop::before, .heads .drop::before { border-width: 3px 2px 0; }
    .doc { flex: 1; padding-left: 255px; white-space: pre; }
    .search { display: flex; align-items: center; height: 18px; width: 168px; padding: 0 2px 0 3px; border: 1px solid #6a6e73; background: #f1f2f5; }
    .search input { flex: 1; min-width: 0; border: 0; background: none; padding: 0 4px; font: inherit; }
    .search input::placeholder { color: #55585c; opacity: 1; }
    .search .drop { width: 9px; }
    .search .drop::before { border-width: 3px 2px 0; }
    .win { display: flex; gap: 1px; padding-left: 3px; }
    .win .drop { width: 9px; }
    .win .drop::before { border-width: 3px 2px 0; }

    .bar { display: flex; height: 26px; flex: none; }
    .group { display: flex; align-items: center; justify-content: space-between; border-right: 1px solid #f5f6f7; border-bottom: 1px solid #8d9196; box-shadow: 0 1px #f5f6f7, inset -1px 0 #a4a8ad; padding: 0 4px 0 1px; }
    .w-a { width: 352px; } .w-b { width: 120px; } .w-c { width: 292px; } .w-d { width: 475px; }
    .combo { width: 80px; height: 18px; border: 1px solid #a9adb2; border-radius: 2px; background: #f0f1f3; appearance: none; }
    .combowrap { position: relative; display: flex; }
    .combowrap::after { content: ""; position: absolute; right: 4px; top: 8px; border: 3px solid transparent; border-top: 4px solid #8d9196; border-bottom: 0; }
    .bar2 { display: flex; justify-content: flex-end; height: 24px; flex: none; }
    .macro { display: flex; align-items: center; justify-content: space-between; width: 135px; margin-right: 523px; padding: 0 6px 0 1px; border-left: 1px solid #a4a8ad; border-right: 1px solid #a4a8ad; }

    .main { display: flex; flex: 1; min-height: 0; }
    .side { display: flex; flex-direction: column; width: 37px; flex: none; }
    .right { width: 39px; }
    .vgroup { display: flex; flex-direction: column; align-items: flex-start; justify-content: space-between; padding: 5px 0 4px 2px; border-bottom: 1px solid #989ca1; box-shadow: 0 1px #f5f6f7; }
    .vgroup .sep { width: 32px; height: 1px; margin: 3px 2px; }
    .vgroup .grip { width: 32px; height: 2px; margin: 0 1px 6px; background: repeating-linear-gradient(90deg, #44484c 0 2px, transparent 2px 4px); }
    .v-a { height: 256px; } .v-b { height: 394px; }
    .v-c { width: 25px; height: 139px; border-right: 1px solid #989ca1; }
    .v-c .sep, .v-c .grip { width: 19px; }
    .v-r { height: 513px; }

    .pm { width: 158px; flex: none; display: flex; flex-direction: column; background: #e2e6eb; border-right: 2px solid #2a2c2f; padding: 2px 2px 0 2px; border-top: 1px solid #d6d9de; box-shadow: inset 0 1px #7d8288; position: relative; }
    .tabs { display: flex; margin: 3px 0 0 -1px; }
    .tabs button { width: 23px; height: 18px; border: 1px solid #33363a; border-left-width: 0; background: #a9abae; border-bottom-width: 1px; }
    .tabs button:first-child { border-left-width: 1px; width: 24px; }
    .tabs .on { background: #e8ebef; border-bottom-color: #e8ebef; }
    .pmtitle { display: flex; align-items: center; gap: 2px; height: 20px; margin: 4px 0 0; padding: 0 6px 0 2px; border: 1px solid #6d7176; background: linear-gradient(#b9babd, #9fa1a4); font-weight: 500; }
    .pmtitle .q { margin-left: auto; color: #fff; font-weight: 700; font-size: 12px; }
    .okrow { display: flex; gap: 7px; padding: 5px 0 10px 1px; }
    .card { border: 1px solid #2f3236; margin: 0 1px 11px; background: #d6d9de; padding: 0 15px 2px 3px; display: flex; flex-direction: column; }
    .card h2 { display: flex; align-items: center; justify-content: space-between; height: 16px; margin: 0 -15px 1px -3px; padding: 0 5px 0 3px; font: inherit; font-weight: 500; background: linear-gradient(#b3b4b7, #9fa1a4); border-bottom: 1px solid #44484c; }
    .chev { width: 8px; height: 9px; }
    .pick { height: 51px; border: 2px solid #76b3df; background: #cfe4f8; }
    .card label { height: 15px; white-space: nowrap; }
    .field { width: 100%; height: 17px; border: 0; border-top: 1px solid #c4c7cb; background: #fff; padding: 0 2px; font: inherit; }
    .gap { margin-top: 4px; }
    .wide { margin-top: 6px; }
    .sel { width: 100%; height: 17px; border: 1px solid #7d8186; border-radius: 2px; background: linear-gradient(#f4f5f6, #d5d7da); font: 10px/15px Roboto, sans-serif; appearance: none; padding: 0 2px; color: #111; }
    .selwrap { position: relative; display: flex; }
    .selwrap::after { content: ""; position: absolute; right: 4px; top: 7px; border: 3px solid transparent; border-top: 4px solid #111; border-bottom: 0; }
    .savebox { height: 219px; background: #fff; border: 1px solid #8f9398; border-right-color: #d0d3d6; margin-top: 3px; }

    .tree { list-style: none; margin: 0; padding: 0; }
    .row { display: flex; align-items: center; height: 15px; white-space: pre; }
    .row .label { margin-left: 3px; line-height: 14px; }
    .t-part { position: absolute; left: -1px; top: 2px; }
    .t-part .label { margin-left: 3px; }
    .t-lib { padding: 7px 0 0 3px; font-size: 10px; }
    .t-save { padding: 2px 0 0 2px; font-size: 10px; }
    .label.selected { background: #3f8ddb; color: #fff; padding: 0 2px 0 1px; margin-left: 2px; }
    .guide { position: relative; width: 15px; height: 15px; flex: none; display: flex; align-items: center; justify-content: center;
      --v: linear-gradient(#9a9ea3, #9a9ea3) 7px 0 / 1px 100% no-repeat; --u: linear-gradient(#9a9ea3, #9a9ea3) 7px 0 / 1px 50% no-repeat;
      --b: linear-gradient(#9a9ea3, #9a9ea3) 7px 100% / 1px 50% no-repeat; --h: linear-gradient(#9a9ea3, #9a9ea3) 8px 7px / 7px 1px no-repeat; }
    .g-v { background: var(--v); }
    .g-t { background: var(--v), var(--h); }
    .g-l { background: var(--u), var(--h); }
    .g-d { background: var(--b), var(--h); }
    .g-h { background: var(--h); }
    .box { width: 9px; height: 9px; border: 1px solid #8d9196; background: #fff; }
    .box svg { width: 7px; height: 7px; display: block; }
    .t-lib .box, .t-save .box { border-color: #a9adb2; background: #f4f6f8; }

    .view { position: relative; flex: 1; min-width: 0; background: #fff; }
    .model { position: absolute; inset: 0; width: 100%; height: 100%; }
    .heads { position: absolute; top: 2px; left: 555px; display: flex; opacity: 0.75; }
    .heads .drop { width: 12px; }
    .handle { position: absolute; left: -1px; top: 415px; width: 8px; height: 33px; display: flex; background: #e2e6eb; border: 1px solid #7d8186; border-left: 0; }
    .handle svg { width: 6px; height: 27px; }
    .viewname { position: absolute; left: 10px; bottom: -2px; font-size: 12px; font-weight: 500; }
    .tasks { position: absolute; right: 0; top: 50px; width: 21px; border: 1px solid #4a4d51; border-right: 0; }
    .tasks button { width: 20px; height: 20px; background: #a7a9ac; border-bottom: 2px solid #55585c; border-right: 1px solid #55585c; }
    .tasks button:last-child { height: 18px; border-bottom: 0; }
    .tasks .on { background: #e2e6eb; border-right: 0; }

    .lib { width: 278px; flex: none; background: #e2e6eb; border-left: 1px solid #55585c; display: flex; flex-direction: column; }
    .libhead { display: flex; align-items: center; justify-content: space-between; height: 17px; padding: 0 1px 0 7px; background: #abacaf; border-bottom: 1px solid #55585c; }
    .libhead h1 { margin: 0; font: inherit; }
    .libhead .db { width: 8px; height: 8px; }
    .libtools { display: flex; height: 25px; align-items: center; padding-left: 1px; }
    .libtools .first { border: 1px solid #9a9ea3; border-radius: 2px; background: #f4f6f8; }
    .libline { height: 4px; margin-top: 15px; border: 1px solid #6d7899; border-width: 1px 0 2px; }

    .filters { display: flex; height: 26px; flex: none; border-bottom: 2px solid #3a3c3f; border-top: 1px solid #e2e4e8; }
    .fgroup { width: 632px; border-bottom: 0; }
    .status { display: flex; align-items: center; height: 15px; flex: none; padding: 0 5px 0 2px; border-top: 1px solid #f5f6f7; line-height: 14px; }
    .status .left { flex: 1; }
    .status .ico { width: 14px; height: 14px; }
    .status .edit { width: 110px; }
    .status .user { width: 60px; color: #a0a4a9; }
    .up { width: 18px; }
    .up::before { content: ""; display: block; width: 0; margin-left: 2px; border: 2px solid transparent; border-bottom: 3px solid #777; border-top: 0; }
    .status .tag { margin-left: 40px; }

    .notes { position: absolute; inset: 0; pointer-events: none; }
    .notes svg { position: absolute; top: 0; right: 0; width: 420px; height: 220px; }
    .num { position: absolute; width: 35px; height: 35px; border: 2px solid #cf2028; border-radius: 50%; color: #cf2028; font: 700 27px/31px "DejaVu Sans", sans-serif; display: flex; justify-content: center; }
    .n1 { right: 364px; top: 138px; } .n2 { right: 225px; top: 34px; } .n3 { right: 316px; top: 28px; }
  `;

  private title() {
    return html`<header class="title">
      <div class="logo"><svg class="ds" viewBox="0 0 19 18"><path d="M4 1.500Q10 0 9.500 3Q9 5 5 7.500M3 8.500Q9 6.500 8.500 10Q7 15.500 1.500 16Q0.500 13 5.500 9M18 3Q13.500 2 12.500 5Q12.500 7 15 9Q17.500 12 14.500 14.500Q12.500 16 9.500 15" fill="none" stroke="#fff" stroke-width="1.800"/></svg><span><b>SOLID</b>WORKS</span></div>
      <nav class="menus">${MENUS.map((m) => html`<button>${m}</button>`)}<span class="pin">${icon("pin")}</span></nav>
      <div class="quick">${tools("new> open> save> print! undo> select> light props list>")}</div>
      <span class="doc">Part1 *</span>
      <div class="search">${icon("prompt")}<input aria-label="ｺﾏﾝﾄﾞ検索" placeholder="ｺﾏﾝﾄﾞ検索" />${icon("lens")}<button class="drop black" aria-label="search menu"></button></div>
      <div class="win">${tools("help! min restore close")}</div>
    </header>`;
  }

  private propertyManager() {
    return html`<aside class="pm">
      <div class="tabs">${["part", "pm", "cfg", "dim", "globe"].map((t) => html`<button class=${classMap({ on: t === "pm" })} aria-label=${t}>${icon(t)}</button>`)}</div>
      <div class="pmtitle">${icon("addlib")}<span>ﾗｲﾌﾞﾗﾘに追加</span><span class="q">?</span></div>
      <div class="okrow"><button aria-label="ok">${icon("ok")}</button><button aria-label="cancel">${icon("cancel")}</button></div>
      <section class="card"><h2>追加ｱｲﾃﾑ(I)${chevrons}</h2><div class="pick"></div></section>
      <section class="card"><h2>ﾌｧｲﾙに保存(S)${chevrons}</h2>
        <label for="fname">ﾌｧｲﾙ名:</label><input class="field" id="fname" />
        <label class="gap">ﾃﾞｻﾞｲﾝ ﾗｲﾌﾞﾗﾘ ﾌｫﾙﾀﾞｰ:</label>
        <div class="savebox">${tree(SAVE_TREE, "t-save")}</div></section>
      <section class="card"><h2>ｵﾌﾟｼｮﾝ(O)${chevrons}</h2>
        <label for="ftype">ﾀｲﾌﾟ:</label>
        <div class="selwrap gap"><select class="sel" id="ftype"><option>SolidWorks Part (*.sldprt)</option></select></div>
        <label class="wide" for="desc">表記:</label><input class="field wide" id="desc" /></section>
    </aside>`;
  }

  private view() {
    return html`<section class="view">
      <svg class="model" viewBox="195 74 1088 860">
        <defs>
          <linearGradient id="side"><stop offset="0" stop-color="#646979"/><stop offset=".12" stop-color="#51545f"/><stop offset=".17" stop-color="#53555f"/><stop offset=".27" stop-color="#5f6372"/><stop offset=".4" stop-color="#696d7d"/><stop offset=".55" stop-color="#737788"/><stop offset=".75" stop-color="#7a7e8f"/><stop offset=".9" stop-color="#7d8194"/><stop offset="1" stop-color="#737788"/></linearGradient>
          <linearGradient id="pinSide"><stop offset="0" stop-color="#6f6e00"/><stop offset=".3" stop-color="#7c7b00"/><stop offset="1" stop-color="#a9a70a"/></linearGradient>
          <filter id="soft" x="-20%" y="-20%" width="140%" height="140%"><feGaussianBlur stdDeviation="12"/></filter>
        </defs>
        <ellipse cx="877" cy="670" rx="253" ry="147" fill="#4a4a44" opacity=".7" filter="url(#soft)"/>
        <path d="M629.500 385V671A247 142.500 0 0 0 1123.500 671V385Z" fill="url(#side)" stroke="#111"/>
        <ellipse cx="876.500" cy="384.500" rx="247" ry="142.500" fill="#a1a4ba" stroke="#111"/>
        <path d="M867.500 329V385A9 5 0 0 0 885.500 385V329Z" fill="url(#pinSide)" stroke="#222"/>
        <path d="M867.500 331A9 5 0 0 0 885.500 331M867.500 334A9 5 0 0 0 885.500 334" fill="none" stroke="#222"/>
        <ellipse cx="876.500" cy="328" rx="8.500" ry="4.500" fill="#d0ce1c" stroke="#222" stroke-width="1.300"/>
        <path d="M229 888V872" stroke="#1c6a28" stroke-width="3"/><path d="M225 874L229 867L233 874Z" fill="#1c6a28"/>
        <path d="M229 888L216 894" stroke="#1c1ca0" stroke-width="3"/><path d="M211 897L216 889L220 897Z" fill="#1c1ca0"/>
        <path d="M229 888L242 895" stroke="#a82020" stroke-width="3"/><path d="M247 898L242 890L238 897Z" fill="#c01c1c"/>
        <text x="225" y="866" font-size="9" fill="#6a8a6c">Y</text><text x="206" y="903" font-size="9" fill="#44448a">Z</text><text x="245" y="903" font-size="9" fill="#b03030">X</text>
      </svg>
      ${tree(PART_TREE, "t-part")}
      <div class="heads">${tools("zfit zarea zprev sect cubewire! cubeblue! glasses! ball scene! screen!")}</div>
      <button class="handle" aria-label="collapse panel"><svg viewBox="0 0 6 27"><path d="M5 3L2 5L5 7ZM5 11L2 13L5 15ZM5 19L2 21L5 23Z" fill="#222"/></svg></button>
      <span class="viewname">*等角投影</span>
      <div class="tasks">${["chat", "home", "books", "folder", "palette", "globe2", "pm"].map((t) => html`<button class=${classMap({ on: t === "books" })} aria-label=${t}>${icon(t)}</button>`)}</div>
    </section>`;
  }

  private library() {
    return html`<aside class="lib">
      <div class="libhead"><svg class="db" viewBox="0 0 8 8"><path d="M4 0.500L1 4L4 7.500M7.500 0.500L4.500 4L7.500 7.500" fill="none" stroke="#111" stroke-width="1.200"/></svg><h1>ﾃﾞｻﾞｲﾝ ﾗｲﾌﾞﾗﾘ</h1>${icon("pushpin")}</div>
      <div class="libtools"><button class="tb first" aria-label="add to library">${icon("addlib")}</button>${tools("newlib newfolder refresh")}</div>
      ${tree(LIBRARY_TREE, "t-lib")}
      <div class="libline"></div>
    </aside>`;
  }

  render() {
    return html`
      ${this.title()}
      <div class="bar">
        <div class="group w-a">${tools(": abc measure balance section gauge sensor check sigma triad curve> table | | tree eye okc stack swirl")}</div>
        <div class="group w-b"><i class="grip"></i><span class="combowrap"><select class="combo" aria-label="configuration"></select></span>${tools("box3")}</div>
        <div class="group w-c">${tools(": zfit zarea zprev | zebra sect cubewire! cubeblue! glasses! ball scene screen!")}</div>
        <div class="group w-d">${tools(": asm1> clip lin> smart move> | cubes | wall> spark> | gears | warn | expl expl2 | h1 h2 h3 h4 h5 h6")}</div>
      </div>
      <div class="bar2"><div class="macro">${tools(": play stop rec macro macroed person")}</div></div>
      <main class="main">
        <div class="side">
          <div class="vgroup v-a">${tools(": l1> l2> | l3> l4 l5 l6 l7 | l8> | l9> l10> | l11")}</div>
          <div class="vgroup v-b">${tools(": l12 l13 l14 l15 l16 l17 l18 l19 l20 l21 l22 l23 l24 | l25 l16 l17 l3 | l9> l10>")}</div>
          <div class="vgroup v-c">${tools(": l26 | l27 l28 l29 l30 l31")}</div>
        </div>
        ${this.propertyManager()} ${this.view()} ${this.library()}
        <div class="side right">
          <div class="vgroup v-r">${tools(": r1> r2> | r3> r4> r5> r6> r7> r8> r9> r10> r11 r12 r13 r14 | r15> r16> r17 r18 r19> r20> | r21> r22 | r23! | r24")}</div>
        </div>
      </main>
      <div class="filters"><div class="group fgroup">${tools(": f0 f1 f2 select> f3 | " + Array.from({ length: 26 }, (_, i) => `v${i + 1}`).join(" "))}</div></div>
      <footer class="status"><span class="left">SolidWorks 2014 x64 Edition</span><span class="edit">編集中： 部品</span><span class="user">ﾕｰｻﾞｰ定義</span><span class="up"></span>${icon("statusHelp")}${icon("tag", "tag")}</footer>
      <div class="notes">
        <svg viewBox="1180 0 420 220"><g fill="none" stroke="#cf2028" stroke-width="4"><circle cx="1268" cy="177" r="28"/><path d="M1273 61L1295 94M1349 67L1320 95"/></g></svg>
        <span class="num n1">1</span><span class="num n2">2</span><span class="num n3">3</span>
      </div>`;
  }
}
